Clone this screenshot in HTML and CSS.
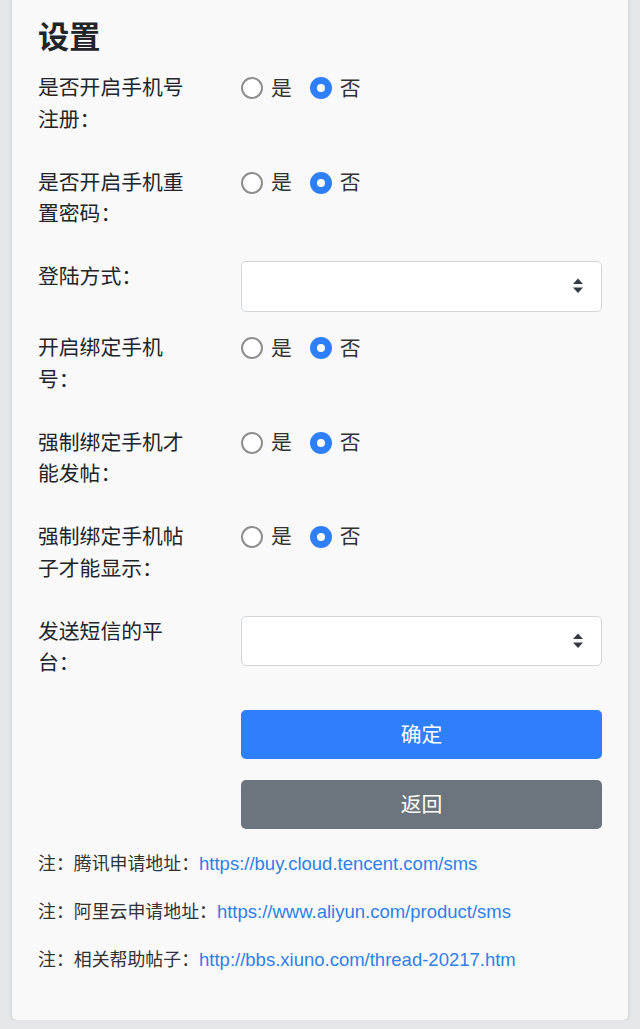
FILE: index.html
```html
<!DOCTYPE html>
<html lang="zh-CN">
<head>
<meta charset="utf-8">
<title>设置</title>
<link rel="stylesheet" href="styles.css">
</head>
<body>
<div class="page">
  <div class="card">
    <div class="card-body">
      <h4 class="card-title">设置</h4>
      <form class="form">
        <div class="form-row">
          <label class="form-label">是否开启手机号注册：</label>
          <div class="radio-group">
            <label class="radio"><input type="radio" name="r1"><span>是</span></label>
            <label class="radio"><input type="radio" name="r1" checked><span>否</span></label>
          </div>
        </div>
        <div class="form-row">
          <label class="form-label">是否开启手机重置密码：</label>
          <div class="radio-group">
            <label class="radio"><input type="radio" name="r2"><span>是</span></label>
            <label class="radio"><input type="radio" name="r2" checked><span>否</span></label>
          </div>
        </div>
        <div class="form-row">
          <label class="form-label">登陆方式：</label>
          <div class="select-wrap">
            <select class="select"><option></option></select>
            <svg class="select-arrow" width="12" height="16" viewBox="0 0 12 16"><path d="M6 0.5 L11 6 L1 6 Z" fill="#343a40"/><path d="M1 9.5 L11 9.5 L6 15 Z" fill="#343a40"/></svg>
          </div>
        </div>
        <div class="form-row">
          <label class="form-label">开启绑定手机号：</label>
          <div class="radio-group">
            <label class="radio"><input type="radio" name="r3"><span>是</span></label>
            <label class="radio"><input type="radio" name="r3" checked><span>否</span></label>
          </div>
        </div>
        <div class="form-row">
          <label class="form-label">强制绑定手机才能发帖：</label>
          <div class="radio-group">
            <label class="radio"><input type="radio" name="r4"><span>是</span></label>
            <label class="radio"><input type="radio" name="r4" checked><span>否</span></label>
          </div>
        </div>
        <div class="form-row">
          <label class="form-label">强制绑定手机帖子才能显示：</label>
          <div class="radio-group">
            <label class="radio"><input type="radio" name="r5"><span>是</span></label>
            <label class="radio"><input type="radio" name="r5" checked><span>否</span></label>
          </div>
        </div>
        <div class="form-row">
          <label class="form-label">发送短信的平台：</label>
          <div class="select-wrap">
            <select class="select"><option></option></select>
            <svg class="select-arrow" width="12" height="16" viewBox="0 0 12 16"><path d="M6 0.5 L11 6 L1 6 Z" fill="#343a40"/><path d="M1 9.5 L11 9.5 L6 15 Z" fill="#343a40"/></svg>
          </div>
        </div>
        <div class="actions">
          <button type="button" class="btn btn-primary">确定</button>
          <button type="button" class="btn btn-secondary">返回</button>
        </div>
      </form>
      <p class="note">注：腾讯申请地址：<a href="#">https://buy.cloud.tencent.com/sms</a></p>
      <p class="note">注：阿里云申请地址：<a href="#">https://www.aliyun.com/product/sms</a></p>
      <p class="note">注：相关帮助帖子：<a href="#">http://bbs.xiuno.com/thread-20217.htm</a></p>
    </div>
  </div>
</div>
</body>
</html>
```

FILE: styles.css
```css
* { box-sizing: border-box; }

html, body {
  margin: 0;
  padding: 0;
}

body {
  background: #e4e6e9;
  font-family: "Liberation Sans", "Noto Sans CJK SC", sans-serif;
  font-size: 20.8px;
  line-height: 1.5;
  color: #212529;
}

.page {
  padding: 0 12px;
}

.card {
  margin-top: -7px;
  background: #f9f9f9;
  border-radius: 5px;
  box-shadow: 0 1px 4px rgba(0, 0, 0, 0.12);
}

.card-body {
  padding: 26px;
}

.card-title {
  margin: 0 0 16px;
  font-size: 31.2px;
  line-height: 1.2;
  font-weight: 700;
  color: #212529;
}

.form {
  margin: 0;
}

.form-row {
  display: grid;
  grid-template-columns: 163px 1fr;
  column-gap: 40px;
  align-items: start;
  margin-bottom: 20.8px;
}

.form-label {
  display: block;
  line-height: 31.6px;
  margin-bottom: 10.4px;
}

.radio-group {
  display: flex;
  align-items: center;
  height: 31.6px;
  gap: 18px;
}

.radio {
  display: flex;
  align-items: center;
  gap: 8px;
  color: #333;
}

.radio input {
  -webkit-appearance: none;
  appearance: none;
  margin: 0;
  width: 22px;
  height: 22px;
  border-radius: 50%;
  border: 2px solid #8e8e8e;
  background: #fff;
  flex: none;
}

.radio input:checked {
  border: 7px solid #2f7ffb;
  background: #fff;
}

.select-wrap {
  position: relative;
  height: 50.4px;
}

.select {
  -webkit-appearance: none;
  appearance: none;
  display: block;
  width: 100%;
  height: 50.4px;
  margin: 0;
  padding: 0 15px;
  border: 1.3px solid #d3d6d9;
  border-radius: 5px;
  background: #fff;
  font: inherit;
  color: #495057;
}

.select-arrow {
  position: absolute;
  right: 18px;
  top: 17px;
  pointer-events: none;
}

.actions {
  margin-left: 203px;
}

.btn {
  display: block;
  width: 100%;
  height: 49.4px;
  margin: 0 0 20.6px;
  padding: 0;
  border: none;
  border-radius: 5px;
  font: inherit;
  color: #fff;
  cursor: pointer;
}

.btn-primary {
  background: #2f7ffb;
}

.btn-secondary {
  background: #6c757d;
}

.note {
  display: flex;
  align-items: baseline;
  height: 27.3px;
  margin: 0 0 20.6px;
  font-size: 17.9px;
  line-height: 27.3px;
  color: #333;
}

.note a {
  font-size: 18.5px;
  line-height: 27.3px;
  color: #2f80e8;
  text-decoration: none;
}
```
